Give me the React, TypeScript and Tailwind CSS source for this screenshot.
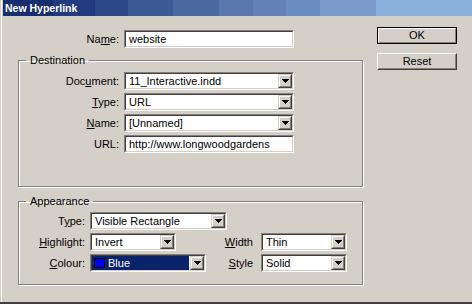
import React from "react";

const Sunken = ({
  className,
  children,
}: {
  className: string;
  children?: React.ReactNode;
}) => (
  <div
    className={`border border-t-[#808080] border-l-[#808080] border-b-white border-r-white ${className}`}
  >
    <div className="flex h-full items-center border border-t-[#404040] border-l-[#404040] border-b-[#d4d0c8] border-r-[#d4d0c8] bg-white">
      {children}
    </div>
  </div>
);

const DropButton = () => (
  <div className="h-full w-[14px] shrink-0 border border-t-[#d4d0c8] border-l-[#d4d0c8] border-b-[#404040] border-r-[#404040]">
    <div className="flex h-full items-center justify-center border border-t-white border-l-white border-b-[#808080] border-r-[#808080] bg-[#d4d0c8]">
      <svg width="7" height="4" viewBox="0 0 7 4" className="block">
        <path d="M0 0h7v1H0z M1 1h5v1H1z M2 2h3v1H2z M3 3h1v1H3z" fill="#000" />
      </svg>
    </div>
  </div>
);

const Combo = ({ className, value }: { className: string; value: string }) => (
  <Sunken className={className}>
    <span className="flex-1 truncate pl-[3px] leading-[14px]">{value}</span>
    <DropButton />
  </Sunken>
);

const Label = ({
  className,
  text,
  keyIndex,
}: {
  className: string;
  text: string;
  keyIndex?: number;
}) => (
  <span className={`shrink-0 text-right leading-[14px] ${className}`}>
    {keyIndex === undefined ? (
      text
    ) : (
      <>
        {text.slice(0, keyIndex)}
        <span className="underline underline-offset-[1px]">{text[keyIndex]}</span>
        {text.slice(keyIndex + 1)}
      </>
    )}
  </span>
);

const groupBox =
  "border border-[#808080] shadow-[1px_1px_0_#ffffff,inset_1px_1px_0_#ffffff]";
const legend = "ml-[7px] px-[4px] text-[11px] leading-[13px]";

export default function App() {
  return (
    <div className="flex h-[304px] w-[472px] flex-col border-b-2 border-[#404040] bg-[#d4d0c8] font-['Liberation_Sans',Arial,sans-serif] text-[11px] text-black shadow-[inset_1px_0_0_#d4d0c8,inset_2px_0_0_#ffffff]">
      <div className="ml-[3px] h-[16px] bg-[linear-gradient(90deg,#182e6e_0px,#182e6e_50px,#213b7e_50px,#213b7e_92px,#2c4886_92px,#2c4886_125px,#3b5994_125px,#3b5994_170px,#4a69a1_170px,#4a69a1_216px,#5977ad_216px,#5977ad_250px,#6481b5_250px,#6481b5_283px,#6b8cc1_283px,#6b8cc1_317px,#7b9bcb_317px,#7b9bcb_373px,#8cb0dc_373px,#8cb0dc_469px)] pl-[2px] text-[10.5px] font-bold leading-[16px] text-white">
        New Hyperlink
      </div>

      <div className="flex flex-1">
        <div className="ml-[18px] w-[345px] pt-[14px]">
          <div className="flex h-[18px] items-center">
            <Label className="w-[101px]" text="Name:" keyIndex={2} />
            <Sunken className="ml-[5px] h-[18px] w-[170px]">
              <span className="pl-[3px] leading-[14px]">website</span>
            </Sunken>
          </div>

          <fieldset className={`mt-[6px] pb-[33px] ${groupBox}`}>
            <legend className={legend}>Destination</legend>
            <div className="mt-[5px] flex flex-col gap-[3px]">
              <div className="flex h-[18px] items-center">
                <Label className="w-[100px]" text="Document:" keyIndex={3} />
                <Combo className="ml-[5px] h-[18px] w-[170px]" value="11_Interactive.indd" />
              </div>
              <div className="flex h-[18px] items-center">
                <Label className="w-[100px]" text="Type:" keyIndex={0} />
                <Combo className="ml-[5px] h-[18px] w-[170px]" value="URL" />
              </div>
              <div className="flex h-[18px] items-center">
                <Label className="w-[100px]" text="Name:" keyIndex={0} />
                <Combo className="ml-[5px] h-[18px] w-[170px]" value="[Unnamed]" />
              </div>
              <div className="flex h-[18px] items-center">
                <Label className="w-[100px]" text="URL:" />
                <Sunken className="ml-[5px] h-[18px] w-[170px]">
                  <span className="truncate pl-[3px] leading-[14px]">
                    http://www.longwoodgardens
                  </span>
                </Sunken>
              </div>
            </div>
          </fieldset>

          <fieldset className={`mt-[8px] pb-[12px] ${groupBox}`}>
            <legend className={legend}>Appearance</legend>
            <div className="mt-[4px] flex flex-col gap-[3px]">
              <div className="flex h-[18px] items-center">
                <Label className="w-[66px]" text="Type:" keyIndex={1} />
                <Combo className="ml-[5px] h-[18px] w-[137px]" value="Visible Rectangle" />
              </div>
              <div className="flex h-[18px] items-center">
                <Label className="w-[66px]" text="Highlight:" keyIndex={0} />
                <Combo className="ml-[5px] h-[18px] w-[86px]" value="Invert" />
                <Label className="w-[77px]" text="Width" keyIndex={0} />
                <Combo className="ml-[8px] h-[18px] w-[86px]" value="Thin" />
              </div>
              <div className="flex h-[18px] items-center">
                <Label className="w-[66px]" text="Colour:" keyIndex={0} />
                <Sunken className="ml-[5px] h-[18px] w-[116px]">
                  <div className="mr-[1px] flex h-full flex-1 items-center bg-[#0a246a] text-white">
                    <span className="ml-[2px] h-[10px] w-[11px] border border-black bg-[#0000ff]" />
                    <span className="ml-[3px] leading-[14px]">Blue</span>
                  </div>
                  <DropButton />
                </Sunken>
                <Label className="w-[47px]" text="Style" keyIndex={0} />
                <Combo className="ml-[8px] h-[18px] w-[86px]" value="Solid" />
              </div>
            </div>
          </fieldset>
        </div>

        <div className="ml-[14px] flex w-[80px] flex-col gap-[9px] pt-[11px]">
          <button className="h-[17px] w-[80px] border border-black bg-[#d4d0c8] p-0">
            <div className="flex h-full items-center justify-center border border-t-white border-l-white border-b-[#808080] border-r-[#808080] leading-[13px]">
              OK
            </div>
          </button>
          <button className="h-[17px] w-[80px] border border-t-white border-l-white border-b-[#404040] border-r-[#404040] bg-[#d4d0c8] p-0">
            <div className="flex h-full items-center justify-center border border-t-[#d4d0c8] border-l-[#d4d0c8] border-b-[#808080] border-r-[#808080] leading-[13px]">
              Reset
            </div>
          </button>
        </div>
      </div>
    </div>
  );
}
